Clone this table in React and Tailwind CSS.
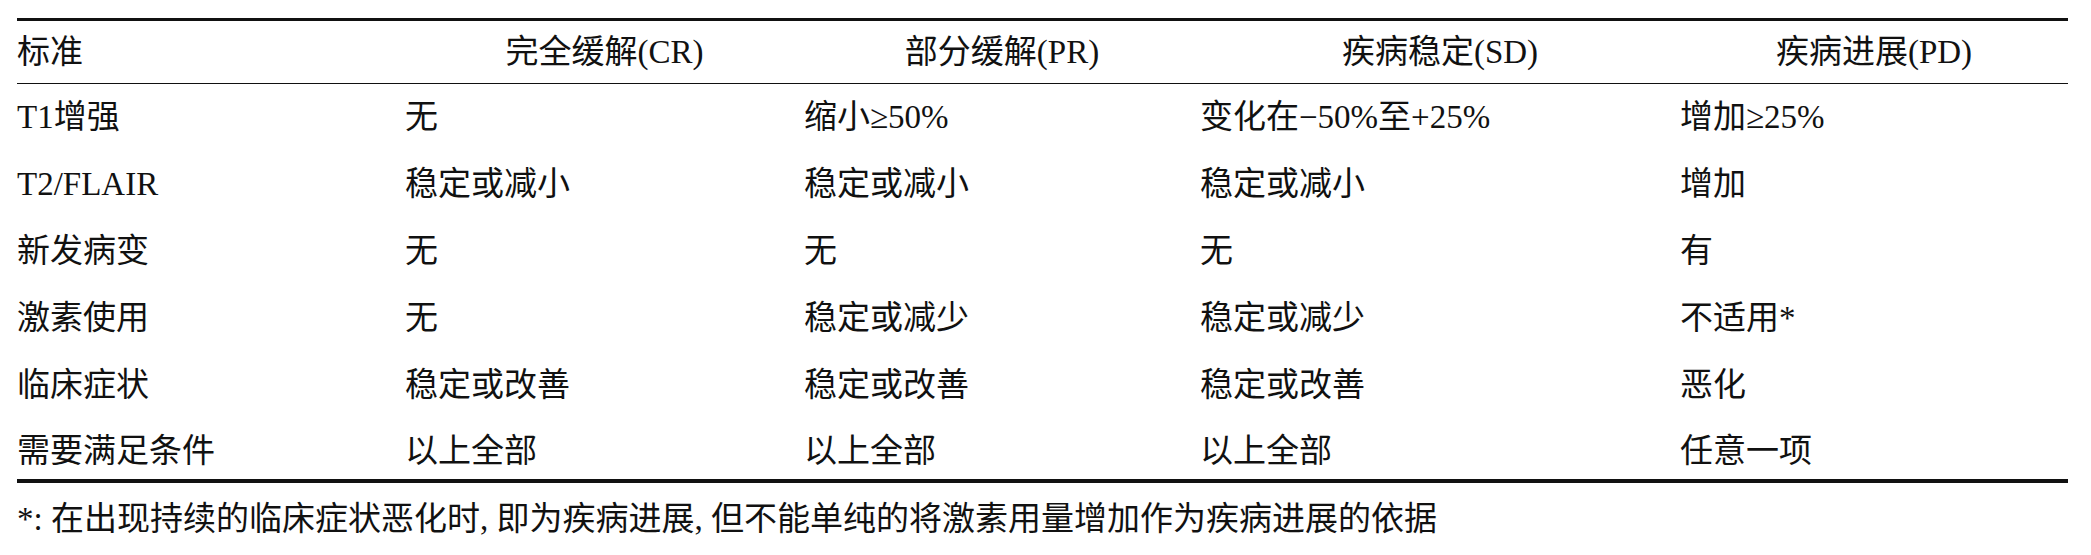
import React from 'react';

const font = { fontFamily: '"Liberation Serif", "Noto Sans CJK SC", serif' };

const headers = ['标准', '完全缓解(CR)', '部分缓解(PR)', '疾病稳定(SD)', '疾病进展(PD)'];

const rows = [
  ['T1增强', '无', '缩小≥50%', '变化在−50%至+25%', '增加≥25%'],
  ['T2/FLAIR', '稳定或减小', '稳定或减小', '稳定或减小', '增加'],
  ['新发病变', '无', '无', '无', '有'],
  ['激素使用', '无', '稳定或减少', '稳定或减少', '不适用*'],
  ['临床症状', '稳定或改善', '稳定或改善', '稳定或改善', '恶化'],
  ['需要满足条件', '以上全部', '以上全部', '以上全部', '任意一项'],
];

export default function App() {
  return (
    <div className="w-[2091px] h-[555px] bg-white text-[#111] overflow-hidden" style={font}>
      <div className="ml-[17px] w-[2051px] pt-[18px]">
        {/* 表头 */}
        <div className="grid grid-cols-[388px_399px_396px_480px_388px] h-[66px] items-center border-t-[3px] border-b-[1.5px] border-[#111] text-[33px] leading-[33px]">
          {headers.map((h, i) => (
            <div key={i} className={i === 0 ? 'text-left' : 'text-center'}>
              {h}
            </div>
          ))}
        </div>

        {/* 表体 */}
        <div className="border-b-[4px] border-[#111]">
          {rows.map((row, r) => (
            <div
              key={r}
              className={`grid grid-cols-[388px_399px_396px_480px_388px] items-center text-[33px] leading-[33px] ${
                r === rows.length - 1 ? 'h-[60px] pt-[4px]' : 'h-[67px]'
              }`}
            >
              {row.map((c, i) => (
                <div key={i} className="text-left whitespace-nowrap">
                  {c}
                </div>
              ))}
            </div>
          ))}
        </div>

        {/* 注释 */}
        <div className="mt-[20px] text-[33px] leading-[33px] whitespace-nowrap">
          *: 在出现持续的临床症状恶化时, 即为疾病进展, 但不能单纯的将激素用量增加作为疾病进展的依据
        </div>
      </div>
    </div>
  );
}
